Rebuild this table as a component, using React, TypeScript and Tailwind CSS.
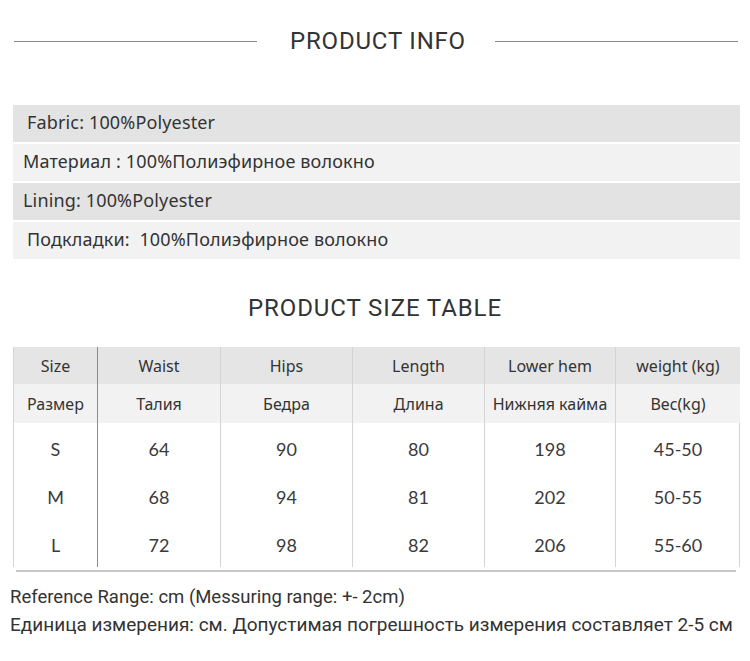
const infoRows = [
  { text: "Fabric: 100%Polyester", bg: "bg-[#e3e3e3]", pad: "pl-[14px]" },
  { text: "Материал : 100%Полиэфирное волокно", bg: "bg-[#f2f2f2]", pad: "pl-[10px]" },
  { text: "Lining: 100%Polyester", bg: "bg-[#e3e3e3]", pad: "pl-[10px]" },
  { text: "Подкладки:  100%Полиэфирное волокно", bg: "bg-[#f2f2f2]", pad: "pl-[14px]" },
];

const headers = ["Size", "Waist", "Hips", "Length", "Lower hem", "weight (kg)"];
const headersRu = ["Размер", "Талия", "Бедра", "Длина", "Нижняя кайма", "Вес(kg)"];
const rows = [
  ["S", "64", "90", "80", "198", "45-50"],
  ["M", "68", "94", "81", "202", "50-55"],
  ["L", "72", "98", "82", "206", "55-60"],
];

// column separator colour: the one after "Size" is darker
const sep = [
  "border-l border-[#d4d4d4]",
  "border-l border-[#8c8c8c]",
  "border-l border-[#d4d4d4]",
  "border-l border-[#d4d4d4]",
  "border-l border-[#d4d4d4]",
  "border-l border-[#d4d4d4]",
];

function SectionTitle({ children }: { children: React.ReactNode }) {
  return (
    <div className="flex items-center px-[14px] pr-[12px]">
      <div className="h-px flex-1 bg-[#8a8a8a]" />
      <h2 className="ml-[33px] mr-[29px] font-['Roboto',sans-serif] text-[24px] leading-[28px] tracking-[0.8px] text-[#333]">
        {children}
      </h2>
      <div className="h-px flex-1 bg-[#8a8a8a]" />
    </div>
  );
}

export default function App() {
  return (
    <div className="w-[750px] h-[661px] bg-white text-[#333] overflow-hidden">
      <div className="pt-[27px]">
        <SectionTitle>PRODUCT INFO</SectionTitle>
      </div>

      <div className="mt-[50px] mx-[13px] w-[727px] flex flex-col gap-[2px]">
        {infoRows.map((r) => (
          <div
            key={r.text}
            className={`h-[37px] flex items-center ${r.bg} ${r.pad} font-['Noto_Sans',sans-serif] text-[18px] whitespace-pre`}
          >
            <span className="-mt-[3px] tracking-[0.15px]">{r.text}</span>
          </div>
        ))}
      </div>

      <h2 className="mt-[35px] text-center font-['Roboto',sans-serif] text-[24px] leading-[28px] tracking-[0.9px]">
        PRODUCT SIZE TABLE
      </h2>

      <div className="mt-[25px] ml-[13px] w-[727px]">
        <div className="grid grid-cols-[84px_123px_132px_132px_131px_125px] border-r border-[#d4d4d4]">
          {headers.map((h, i) => (
            <div
              key={h}
              className={`h-[37px] pt-[1px] flex items-center justify-center bg-[#e5e5e5] ${sep[i]} font-['Noto_Sans',sans-serif] text-[16px]`}
            >
              {h}
            </div>
          ))}
          {headersRu.map((h, i) => (
            <div
              key={h}
              className={`h-[39px] flex items-center justify-center bg-[#f2f2f2] ${sep[i]} font-['Noto_Sans',sans-serif] text-[16px]`}
            >
              {h}
            </div>
          ))}
          {rows.map((row) =>
            row.map((v, i) => (
              <div
                key={row[0] + i}
                className={`h-[48px] pt-[5px] flex items-center justify-center ${sep[i]} font-['Lato',sans-serif] text-[18px] text-[#3a3a3a]`}
              >
                {v}
              </div>
            ))
          )}
        </div>
        <div className="ml-[3px] mr-[4px] mt-[3px] h-[2px] bg-[#c8c8c8]" />
      </div>

      <div className="mt-[12px] pl-[10px] font-['Roboto',sans-serif] leading-[27px] text-[#333]">
        <p className="text-[18.5px]">Reference Range: cm (Messuring range: +- 2cm)</p>
        <p className="text-[19px]">Единица измерения: см. Допустимая погрешность измерения составляет 2-5 см</p>
      </div>
    </div>
  );
}
